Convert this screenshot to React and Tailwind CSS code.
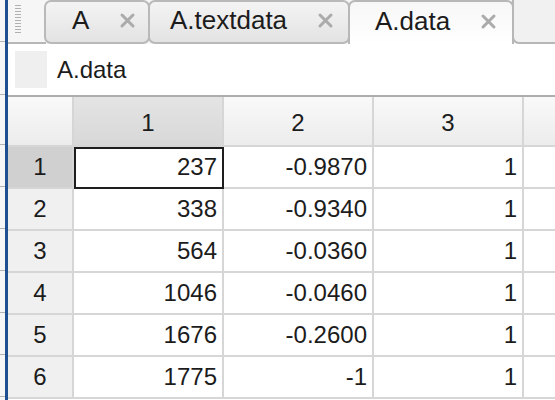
import React from "react";

const ROWS = [
  ["237", "-0.9870", "1"],
  ["338", "-0.9340", "1"],
  ["564", "-0.0360", "1"],
  ["1046", "-0.0460", "1"],
  ["1676", "-0.2600", "1"],
  ["1775", "-1", "1"],
];

const TICKS = [42, 53, 50, 42, 42, 42, 42, 42, 42];

function CloseIcon() {
  return (
    <svg width="17" height="17" viewBox="0 0 17 17" className="shrink-0">
      <path d="M3 3L14 14M14 3L3 14" stroke="#ababab" strokeWidth="3" strokeLinecap="round" />
    </svg>
  );
}

function Tab({ label, width, pl, active }) {
  const base = "-ml-[2px] flex h-[44px] shrink-0 items-center pb-[4px] text-[26px] first:ml-0";
  const look = active
    ? "rounded-t-[7px] border-2 border-b-0 border-[#b7b7b7] bg-linear-to-b from-[#f7f7f7] to-white"
    : "rounded-[7px] border-2 border-[#b9b9b9] bg-linear-to-b from-[#f4f4f4] to-[#e3e3e3]";
  return (
    <div className={`${base} ${look} ${width} ${pl}`}>
      <span className="leading-none">{label}</span>
      <span className="ml-[30px]">
        <CloseIcon />
      </span>
    </div>
  );
}

export default function App() {
  return (
    <div className="flex h-[400px] w-[555px] overflow-hidden bg-white font-['Liberation_Sans',Arial,sans-serif] text-[#1c1c1c]">
      {/* strip of the neighbouring panel */}
      <div className="flex w-[5px] shrink-0 flex-col bg-[#f6f6f6]">
        {TICKS.map((h, i) => (
          <div key={i} style={{ height: h }} className="shrink-0 border-b border-[#b3b3b3]" />
        ))}
      </div>
      <div className="w-[3px] shrink-0 bg-[#1e4f90]" />

      <div className="flex min-w-0 flex-1 flex-col">
        {/* tab strip */}
        <div className="flex h-[44px] shrink-0 bg-[#f6f6f6]">
          <div className="flex w-[38px] shrink-0 items-start border-b-2 border-[#b7b7b7] pl-[7px] pt-[5px]">
            <div className="flex flex-col gap-[2px]">
              {Array.from({ length: 10 }).map((_, i) => (
                <div key={i} className="h-px w-[6px] bg-[#b0b0b0]" />
              ))}
            </div>
          </div>
          <Tab label="A" width="w-[106px]" pl="pl-[26px]" />
          <Tab label="A.textdata" width="w-[202px]" pl="pl-[20px]" />
          <Tab label="A.data" width="w-[166px]" pl="pl-[25px]" active />
          <div className="-ml-[2px] flex-1 rounded-bl-[7px] border-b-2 border-l-2 border-[#b7b7b7] bg-[#f1f1f1]" />
        </div>

        {/* variable name bar */}
        <div className="flex h-[51px] shrink-0 items-center">
          <div className="ml-[7px] h-[37px] w-[32px] bg-[#efefef]" />
          <span className="ml-[10px] text-[24px]">A.data</span>
        </div>

        {/* grid */}
        <div className="flex flex-1 flex-col border-t-2 border-[#adadad]">
          <div className="flex h-[50px] shrink-0">
            <div className="w-[66px] shrink-0 border-b-2 border-r-2 border-[#d6d6d6] bg-linear-to-b from-[#f9f9f9] to-[#ececec]" />
            {["1", "2", "3"].map((c, i) => (
              <div
                key={c}
                className={`flex w-[150px] shrink-0 items-center justify-center border-b-2 border-r-2 border-[#d6d6d6] pt-[3px] text-[24px] ${
                  i === 0 ? "bg-linear-to-b from-[#e4e4e4] to-[#d8d8d8]" : "bg-linear-to-b from-[#f9f9f9] to-[#ececec]"
                }`}
              >
                {c}
              </div>
            ))}
            <div className="flex-1 border-b-2 border-[#d6d6d6] bg-linear-to-b from-[#f9f9f9] to-[#ececec]" />
          </div>

          {ROWS.map((row, r) => (
            <div key={r} className="flex h-[42px] shrink-0">
              <div
                className={`flex w-[66px] shrink-0 items-center justify-center border-b-2 border-r-2 border-[#d6d6d6] text-[24px] ${
                  r === 0 ? "bg-[#d0d0d0]" : "bg-[#f0f0f0]"
                }`}
              >
                {r + 1}
              </div>
              {row.map((v, c) => (
                <div
                  key={c}
                  className={`flex w-[150px] shrink-0 items-center justify-end border-b-2 border-r-2 border-[#d6d6d6] pr-[5px] text-[24px] ${
                    r === 0 && c === 0 ? "outline-2 -outline-offset-2 outline-[#1e1e1e]" : ""
                  }`}
                >
                  {v}
                </div>
              ))}
              <div className="flex-1 border-b-2 border-[#d6d6d6]" />
            </div>
          ))}
        </div>
      </div>
    </div>
  );
}
